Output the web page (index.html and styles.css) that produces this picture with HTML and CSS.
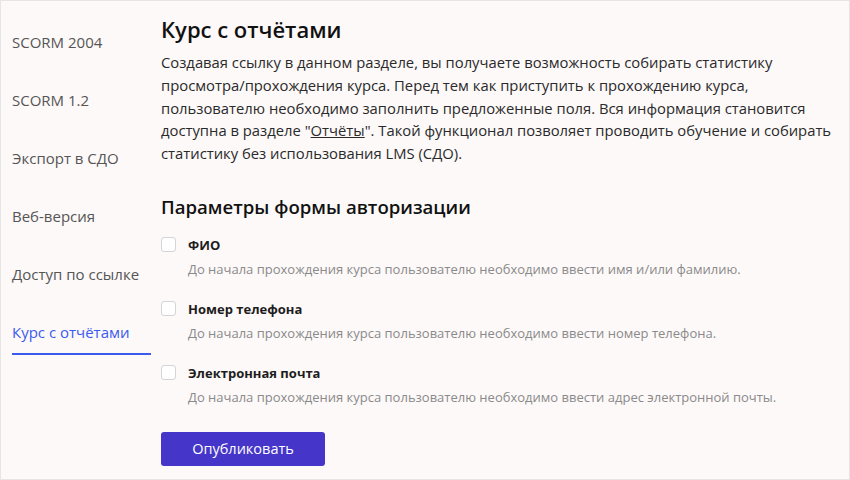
FILE: index.html
```html
<!DOCTYPE html>
<html lang="ru">
<head>
<meta charset="utf-8">
<link rel="stylesheet" href="styles.css">
</head>
<body>
<div class="frame">
  <nav class="sidebar">
    <a class="nav-item">SCORM 2004</a>
    <a class="nav-item">SCORM 1.2</a>
    <a class="nav-item">Экспорт в СДО</a>
    <a class="nav-item">Веб-версия</a>
    <a class="nav-item">Доступ по ссылке</a>
    <a class="nav-item active">Курс с отчётами</a>
  </nav>
  <main class="content">
    <h1 class="title">Курс с отчётами</h1>
    <p class="intro">Создавая ссылку в данном разделе, вы получаете возможность собирать статистику просмотра/прохождения курса. Перед тем как приступить к прохождению курса, пользователю необходимо заполнить предложенные поля. Вся информация становится доступна в разделе "<u class="link">Отчёты</u>". Такой функционал позволяет проводить обучение и собирать статистику без использования LMS (СДО).</p>
    <h2 class="subtitle">Параметры формы авторизации</h2>
    <div class="options">
      <div class="option">
        <label class="option-head"><span class="box"></span><span class="option-label">ФИО</span></label>
        <div class="option-desc">До начала прохождения курса пользователю необходимо ввести имя и/или фамилию.</div>
      </div>
      <div class="option">
        <label class="option-head"><span class="box"></span><span class="option-label">Номер телефона</span></label>
        <div class="option-desc">До начала прохождения курса пользователю необходимо ввести номер телефона.</div>
      </div>
      <div class="option">
        <label class="option-head"><span class="box"></span><span class="option-label">Электронная почта</span></label>
        <div class="option-desc">До начала прохождения курса пользователю необходимо ввести адрес электронной почты.</div>
      </div>
    </div>
    <button class="publish">Опубликовать</button>
  </main>
</div>
</body>
</html>
```
FILE: styles.css
```css
* { box-sizing: border-box; }
html, body { margin: 0; padding: 0; }
body {
  font-family: "Open Sans", "Noto Sans", sans-serif;
  background: #fdf9f9;
}
.frame {
  width: 850px;
  height: 480px;
  border: 1px solid #e6e4e4;
  background: #fdf9f9;
  display: flex;
  padding-left: 11px;
  gap: 10px;
  overflow: hidden;
}
.sidebar {
  width: 139px;
  flex: none;
  display: flex;
  flex-direction: column;
  padding-top: 30px;
}
.nav-item {
  display: block;
  font-size: 15px;
  line-height: 22px;
  color: #555;
  height: 58px;
}
.nav-item.active {
  color: #3b5bef;
  height: 34px;
  border-bottom: 2px solid #3b5bef;
}
.content {
  flex: 1;
  padding-top: 13px;
  padding-right: 4px;
}
.title {
  margin: 0;
  font-size: 22px;
  font-weight: 600;
  line-height: 30px;
  color: #111;
}
.intro {
  margin: 7px 0 0;
  font-size: 14.8px;
  line-height: 22.8px;
  color: #2a2a2a;
}
.link { text-decoration: underline; }
.subtitle {
  margin: 29px 0 0;
  font-size: 18.6px;
  font-weight: 600;
  line-height: 26px;
  color: #111;
}
.options {
  margin-top: 16px;
  display: flex;
  flex-direction: column;
  gap: 22px;
}
.option-head {
  display: flex;
  align-items: center;
  gap: 12px;
  height: 18px;
}
.box {
  width: 15px;
  height: 15px;
  border: 1px solid #d6d4d6;
  border-radius: 3px;
  background: #fff;
}
.option-label {
  font-size: 13px;
  font-weight: 700;
  color: #1d1d1d;
}
.option-desc {
  margin-top: 6px;
  padding-left: 27px;
  font-size: 13px;
  line-height: 18px;
  color: #8a8a8a;
}
.publish {
  margin-top: 26px;
  width: 164px;
  height: 34px;
  border: none;
  border-radius: 3px;
  background: #4535c9;
  color: #fff;
  font-family: inherit;
  font-size: 14.5px;
}
```
